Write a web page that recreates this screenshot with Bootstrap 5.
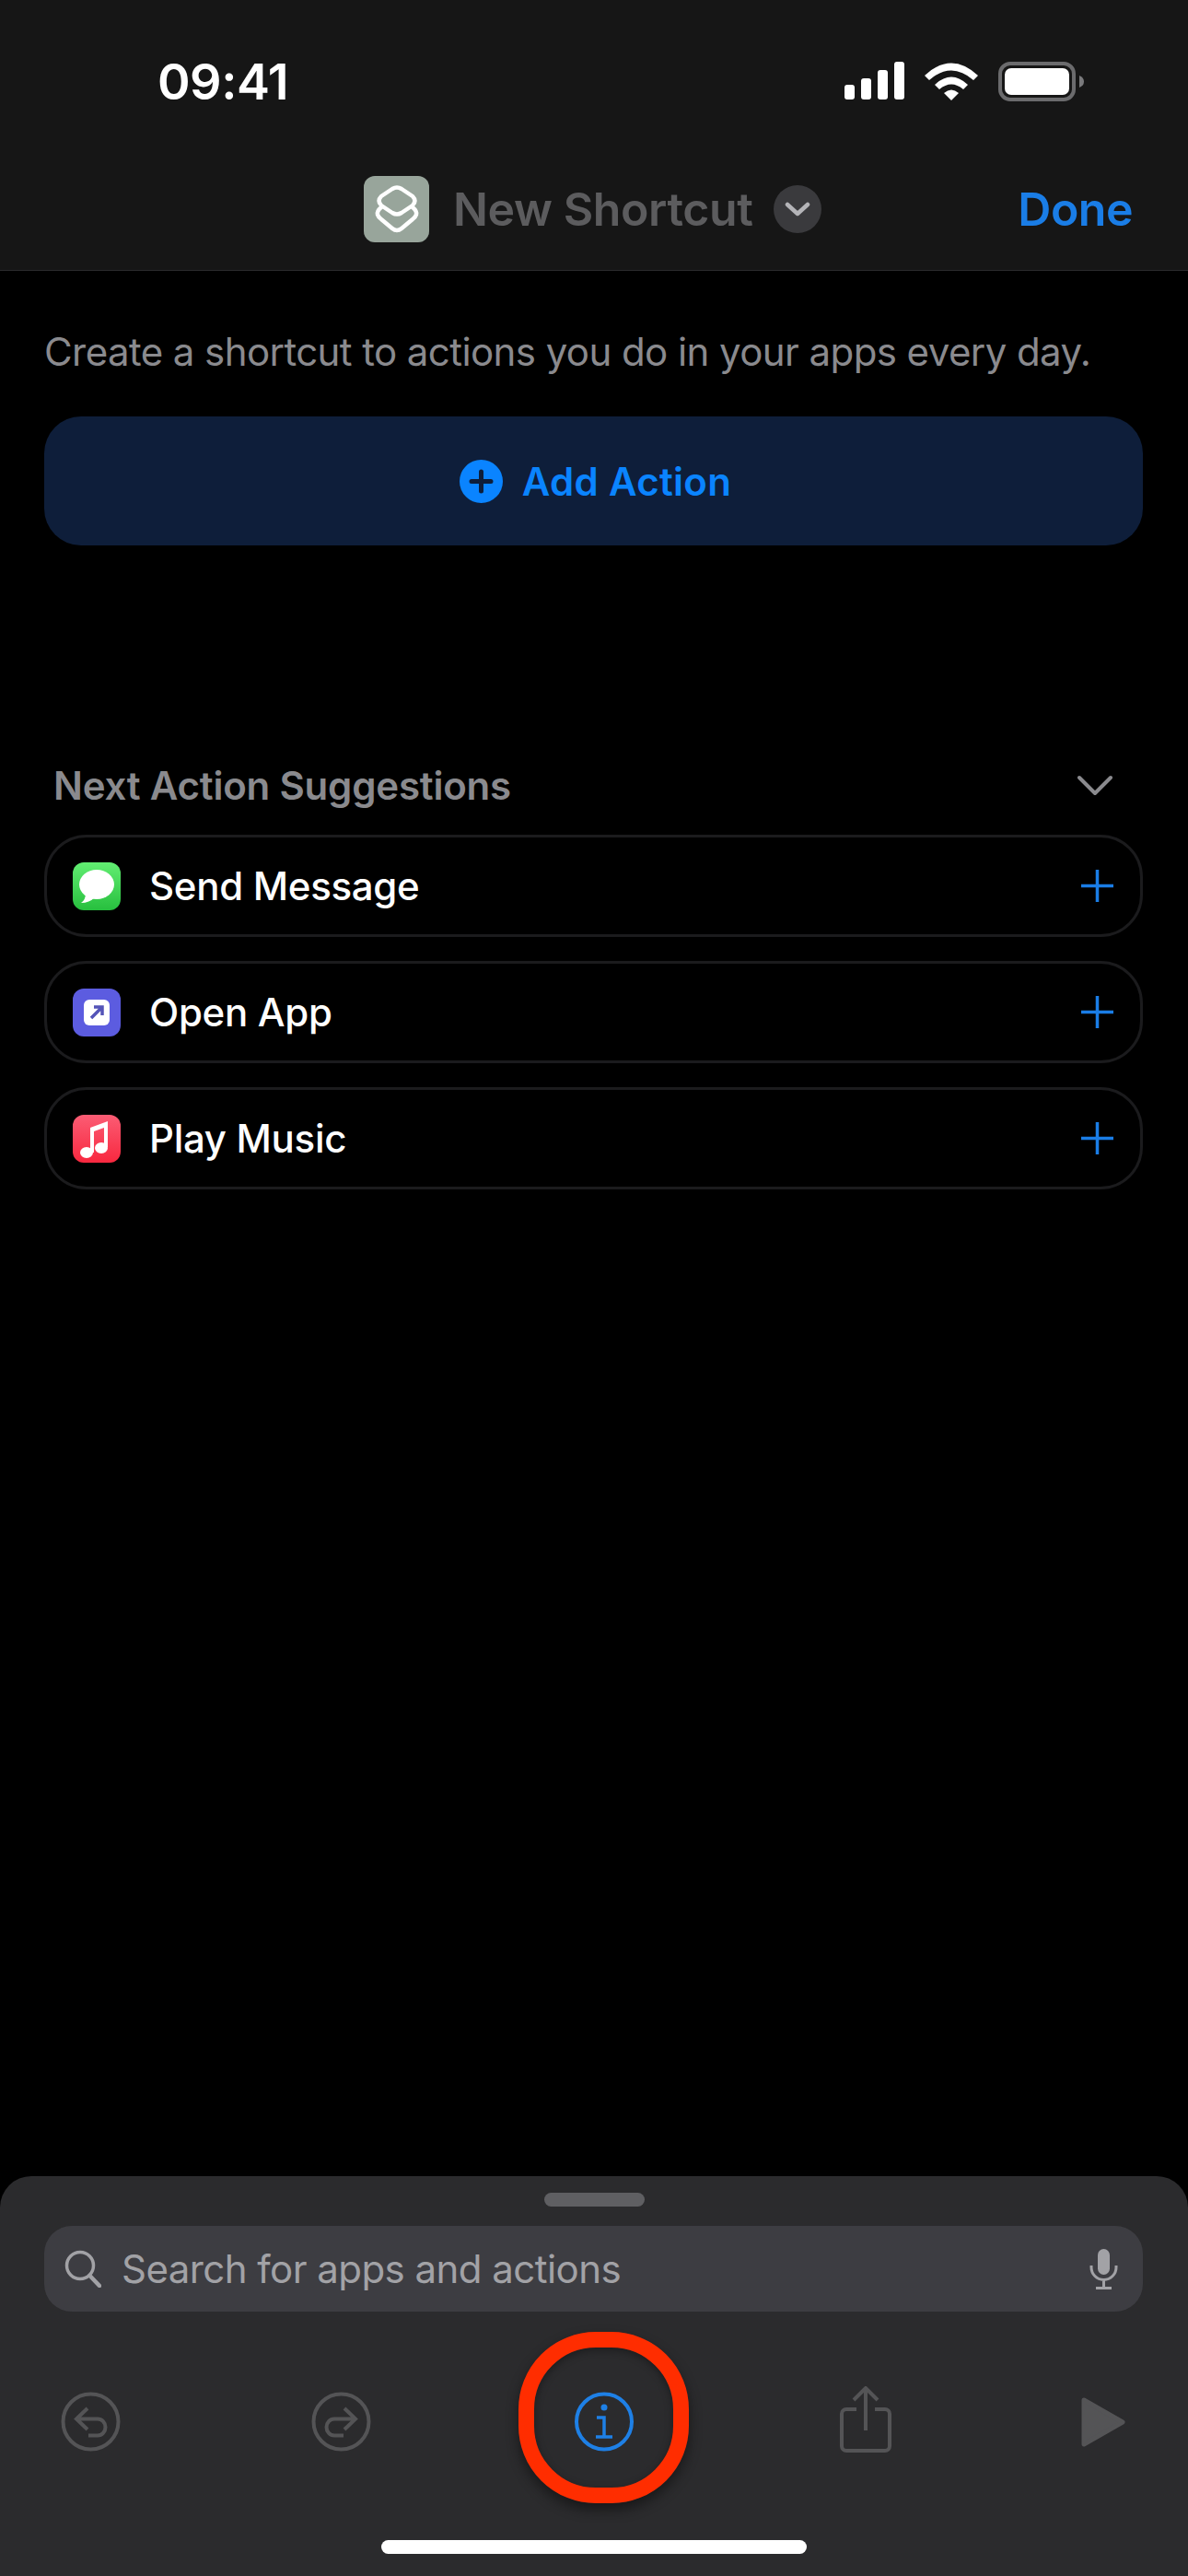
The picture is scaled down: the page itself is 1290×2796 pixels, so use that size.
<!DOCTYPE html>
<html lang="en">
  <head>
    <meta charset="UTF-8" />
    <meta name="viewport" content="width=device-width, initial-scale=1.0" />
    <title>New Shortcut</title>
    <link href="https://cdn.jsdelivr.net/npm/bootstrap@5.3.0/dist/css/bootstrap.min.css" rel="stylesheet" />
    <style>
      body {
        background: #000;
        width: 1290px;
        height: 2796px;
        overflow: hidden;
        font-family: Inter, "Liberation Sans", sans-serif;
      }
      svg {
        display: block;
        flex: none;
      }
      .page-top {
        background: #161616;
        border-bottom: 1px solid #2a2a2c;
        height: 294px;
      }
      .status-row {
        height: 176px;
        padding: 0 113px 0 171px;
      }
      .status-icons {
        gap: 22px;
      }
      .clock {
        color: #fff;
        font-size: 54px;
        font-weight: 600;
        letter-spacing: -0.5px;
      }
      .title-row {
        height: 102px;
        padding: 0 60px 0 395px;
      }
      .title-text {
        color: #5c5c5e;
        font-size: 50px;
        font-weight: 600;
        line-height: 60px;
        letter-spacing: -0.4px;
        margin: 0 0 0 26px;
      }
      .title-chev {
        width: 52px;
        height: 52px;
        margin-left: 23px;
        border-radius: 50%;
        background: #3a3a3d;
      }
      .done-link {
        color: #1a7de6;
        font-size: 50px;
        font-weight: 600;
        line-height: 60px;
        letter-spacing: -0.5px;
        text-decoration: none;
      }
      .page-body {
        padding: 0 49px 0 48px;
      }
      .intro-text {
        color: #8a8a8e;
        font-size: 42px;
        line-height: 52px;
        letter-spacing: -0.58px;
        margin: 0;
        padding-top: 62px;
        white-space: nowrap;
      }
      .add-action {
        height: 140px;
        margin-top: 44px;
        padding-left: 16px;
        border: 0;
        border-radius: 40px;
        background: #0e1e3a;
        color: #0a84ff;
        font-size: 42px;
        font-weight: 600;
        letter-spacing: 0.3px;
        gap: 21px;
      }
      .add-action:hover {
        background: #0e1e3a;
        color: #0a84ff;
      }
      .suggest-head {
        margin-top: 233px;
        padding: 0 33px 0 10px;
        height: 54px;
        color: #8a8a8e;
        font-size: 42px;
        font-weight: 600;
        letter-spacing: -0.2px;
      }
      .suggest-list {
        margin-top: 27px;
        gap: 26px;
      }
      .suggest-row {
        height: 111px;
        padding: 0 29px 0 28px;
        border: 3px solid #1b1b1d;
        border-radius: 46px;
        color: #fff;
        font-size: 42px;
        font-weight: 500;
        letter-spacing: -0.3px;
        gap: 31px;
      }
      .app-tile {
        width: 52px;
        height: 52px;
        border-radius: 12px;
        flex: none;
      }
      .tile-green {
        background: linear-gradient(#62ee72, #27bf3e);
      }
      .tile-purple {
        background: #5c5ce0;
      }
      .tile-red {
        background: linear-gradient(#fb5c74, #f8283f);
      }
      .bottom-sheet {
        height: 434px;
        background: #2b2b2d;
        border-radius: 34px 34px 0 0;
        padding-top: 18px;
      }
      .drag-handle {
        width: 109px;
        height: 15px;
        border-radius: 8px;
        background: #5f5f62;
      }
      .search-box {
        height: 93px;
        margin: 21px 49px 0 48px;
        padding: 0 27px 0 22px;
        border-radius: 30px;
        background: #3d3d42;
        color: #a2a2a6;
        font-size: 42px;
        letter-spacing: -0.55px;
        gap: 22px;
      }
      .tool-row {
        height: 73px;
        margin-top: 83px;
        padding-left: 66px;
      }
      .tool-redo {
        margin-left: 207px;
      }
      .tool-info {
        margin-left: 220px;
      }
      .tool-share {
        margin-left: 223px;
        margin-top: -5px;
      }
      .tool-play {
        margin-left: 206px;
      }
      .ring-mark {
        position: absolute;
        left: -60px;
        top: -65px;
        width: 185px;
        height: 186px;
        border: 17px solid #ff2d00;
        border-radius: 84px;
        box-shadow: 0 7px 14px rgba(0, 0, 0, 0.45), inset 0 3px 8px rgba(0, 0, 0, 0.35);
      }
      .home-bar {
        width: 462px;
        height: 15px;
        margin: 92px 0 0 414px;
        border-radius: 8px;
        background: #fff;
      }
    </style>
  </head>
  <body class="d-flex flex-column">
    <header class="page-top">
      <div class="status-row d-flex align-items-center justify-content-between">
        <span class="clock">09:41</span>
        <div class="status-icons d-flex align-items-center">
          <svg width="65" height="42" viewBox="0 0 65 42" fill="#fff">
            <rect x="0" y="25" width="11" height="16" rx="3" />
            <rect x="18" y="18" width="11" height="23" rx="3" />
            <rect x="36" y="9" width="11" height="32" rx="3" />
            <rect x="54" y="0" width="11" height="41" rx="3" />
          </svg>
          <svg width="58" height="42" viewBox="0 0 58 42" fill="#fff">
            <path d="M0 15 Q29 -12 58 15 L53 20 Q29 -1 5 20 Z" />
            <path d="M11 25 Q29 8 47 25 L42 30 Q29 19 16 30 Z" />
            <path d="M21 34 Q29 27 37 34 L29 42 Z" />
          </svg>
          <svg width="93" height="43" viewBox="0 0 93 43">
            <rect x="2" y="2" width="80" height="39" rx="11" fill="none" stroke="#6b6b6d" stroke-width="4" />
            <rect x="7" y="7" width="70" height="29" rx="7" fill="#fff" />
            <path d="M88 15 Q93 17 93 21.5 Q93 26 88 28 Z" fill="#7a7a7c" />
          </svg>
        </div>
      </div>
      <div class="title-row d-flex align-items-center">
        <svg width="71" height="72" viewBox="0 0 71 72">
          <rect width="71" height="72" rx="12" fill="#98a59b" />
          <g fill="none" stroke="#fff" stroke-width="4.5" stroke-linejoin="round" stroke-linecap="round">
            <path d="M31 14 Q36 11 41 14 L53 22 Q58 27 53 32 L41 40 Q36 43 31 40 L19 32 Q14 27 19 22 Z" />
            <path d="M19 34 Q14 38 15 42 Q16 45 19 47 L31 57 Q36 61 41 57 L53 47 Q56 45 57 42 Q58 38 53 34" />
          </g>
        </svg>
        <h1 class="title-text">New Shortcut</h1>
        <div class="title-chev d-flex align-items-center justify-content-center">
          <svg width="28" height="18" viewBox="0 0 28 18" fill="none" stroke="#b4b4b8" stroke-width="4.5" stroke-linecap="round" stroke-linejoin="round">
            <path d="M3 4 L14 14 L25 4" />
          </svg>
        </div>
        <a class="done-link ms-auto" href="#">Done</a>
      </div>
    </header>

    <main class="page-body flex-grow-1">
      <p class="intro-text">Create a shortcut to actions you do in your apps every day.</p>
      <button class="add-action btn w-100 d-flex align-items-center justify-content-center" type="button">
        <svg width="47" height="47" viewBox="0 0 47 47">
          <circle cx="23.5" cy="23.5" r="23.5" fill="#0a84ff" />
          <path d="M23.5 13 V34 M13 23.5 H34" stroke="#0e1e3a" stroke-width="5" stroke-linecap="round" />
        </svg>
        <span>Add Action</span>
      </button>

      <div class="suggest-head d-flex align-items-center justify-content-between">
        <span>Next Action Suggestions</span>
        <svg width="38" height="23" viewBox="0 0 38 23" fill="none" stroke="#8a8a8e" stroke-width="4" stroke-linecap="round" stroke-linejoin="round">
          <path d="M2 3 L19 20 L36 3" />
        </svg>
      </div>

      <div class="suggest-list d-flex flex-column">
        <div class="suggest-row d-flex align-items-center">
          <div class="app-tile tile-green">
            <svg width="52" height="52" viewBox="0 0 52 52" fill="#fff">
              <ellipse cx="26" cy="24" rx="19" ry="16" />
              <path d="M14 33 Q14 41 9 44 Q18 44 24 38 Z" />
            </svg>
          </div>
          <span>Send Message</span>
          <svg class="ms-auto" width="35" height="35" viewBox="0 0 35 35" stroke="#1a7de6" stroke-width="3.5">
            <path d="M17.5 0 V35 M0 17.5 H35" />
          </svg>
        </div>
        <div class="suggest-row d-flex align-items-center">
          <div class="app-tile tile-purple">
            <svg width="52" height="52" viewBox="0 0 52 52">
              <rect x="12" y="12" width="28" height="28" rx="6" fill="#fff" />
              <path d="M20 32 L31 21 M23 20 H32 V29" fill="none" stroke="#5454b8" stroke-width="3.5" />
            </svg>
          </div>
          <span>Open App</span>
          <svg class="ms-auto" width="35" height="35" viewBox="0 0 35 35" stroke="#1a7de6" stroke-width="3.5">
            <path d="M17.5 0 V35 M0 17.5 H35" />
          </svg>
        </div>
        <div class="suggest-row d-flex align-items-center">
          <div class="app-tile tile-red">
            <svg width="52" height="52" viewBox="0 0 52 52" fill="#fff">
              <path d="M19 14 L38 7 V35 H34 V14 L23 18 V41 H19 Z" />
              <ellipse cx="15" cy="41" rx="7" ry="6" />
              <ellipse cx="31" cy="36" rx="7" ry="6" />
            </svg>
          </div>
          <span>Play Music</span>
          <svg class="ms-auto" width="35" height="35" viewBox="0 0 35 35" stroke="#1a7de6" stroke-width="3.5">
            <path d="M17.5 0 V35 M0 17.5 H35" />
          </svg>
        </div>
      </div>
    </main>

    <section class="bottom-sheet">
      <div class="drag-handle mx-auto"></div>
      <div class="search-box d-flex align-items-center">
        <svg width="40" height="41" viewBox="0 0 40 41" fill="none" stroke="#a2a2a6" stroke-width="3.5" stroke-linecap="round">
          <circle cx="17" cy="17" r="14.5" />
          <path d="M27.5 28 L38 39" stroke-width="4.5" />
        </svg>
        <span>Search for apps and actions</span>
        <svg class="ms-auto" width="31" height="44" viewBox="0 0 31 44" fill="none" stroke="#a2a2a6" stroke-width="3">
          <rect x="9" y="0" width="13" height="28" rx="6.5" fill="#a2a2a6" stroke="none" />
          <path d="M2 18 V20 A13.5 13.5 0 0 0 29 20 V18 M15.5 34 V42 M7 42.5 H24" />
        </svg>
      </div>
      <div class="tool-row d-flex align-items-center">
        <svg width="65" height="65" viewBox="0 0 65 65" fill="none" stroke="#545456" stroke-width="4">
          <circle cx="32.5" cy="32.5" r="30" />
          <path d="M29 18 L17 29.5 L29 41 M17 29.5 H40 A8.5 9 0 0 1 40 47.5 H30" />
        </svg>
        <svg class="tool-redo" width="65" height="65" viewBox="0 0 65 65" fill="none" stroke="#545456" stroke-width="4">
          <circle cx="32.5" cy="32.5" r="30" />
          <path d="M36 18 L48 29.5 L36 41 M48 29.5 H25 A8.5 9 0 0 0 25 47.5 H35" />
        </svg>
        <div class="tool-info position-relative">
          <svg width="66" height="65" viewBox="0 0 66 65" fill="none" stroke="#1e80e6" stroke-width="4">
            <circle cx="33" cy="32.5" r="30" />
            <circle cx="33" cy="17" r="3.5" fill="#1e80e6" stroke="none" />
            <path d="M25 28 H33 V49 M24 49 H42" stroke-width="3.5" />
          </svg>
          <div class="ring-mark"></div>
        </div>
        <svg class="tool-share" width="56" height="72" viewBox="0 0 56 72" fill="none" stroke="#545456" stroke-width="4">
          <path d="M28 2 V48 M15 15 L28 2 L41 15" />
          <path d="M18 25 H7 A5 5 0 0 0 2 30 V65 A5 5 0 0 0 7 70 H49 A5 5 0 0 0 54 65 V30 A5 5 0 0 0 49 25 H38" />
        </svg>
        <svg class="tool-play" width="48" height="54" viewBox="0 0 48 54">
          <path d="M3 3 L45 27 L3 51 Z" fill="#545456" stroke="#545456" stroke-width="5" stroke-linejoin="round" />
        </svg>
      </div>
      <div class="home-bar"></div>
    </section>

    <script src="https://cdn.jsdelivr.net/npm/bootstrap@5.3.0/dist/js/bootstrap.bundle.min.js"></script>
  </body>
</html>
